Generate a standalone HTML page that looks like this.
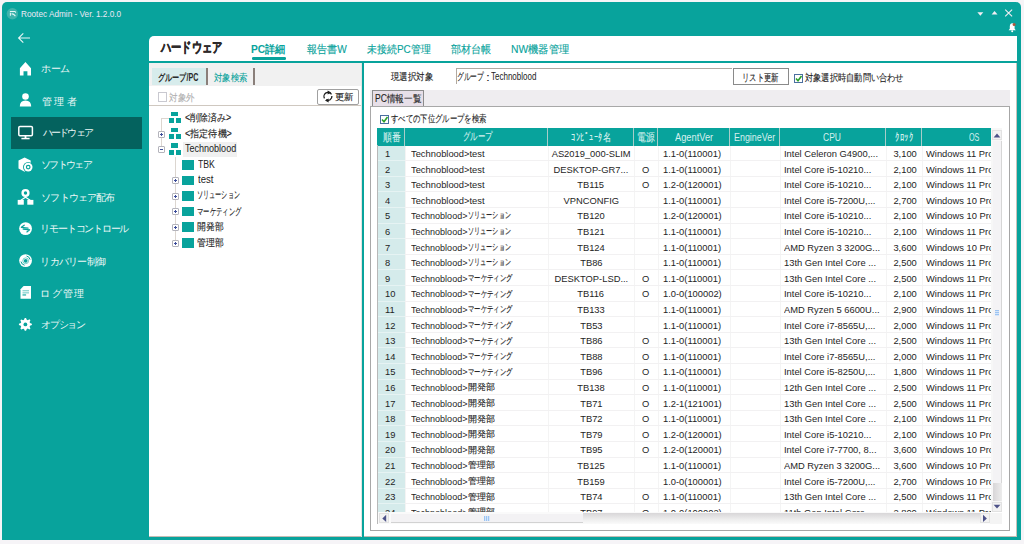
<!DOCTYPE html><html><head><meta charset='utf-8'><style>
*{box-sizing:border-box;margin:0;padding:0}
html,body{width:1024px;height:544px;overflow:hidden;background:#f6f4f7;font-family:"Liberation Sans",sans-serif;}
.a{position:absolute;white-space:nowrap}
.k{-webkit-text-stroke:0.12px currentColor}
.c{position:absolute;font-size:9.5px;line-height:14px;height:14px;color:#1e1e1e;white-space:nowrap}
.c span{display:inline-block;transform-origin:0 0}
</style></head><body>
<div class='a' style='left:2px;top:2px;width:1018.5px;height:538px;background:#08a39c;border-radius:5px 5px 0 0'></div>
<svg class='a' style='left:5px;top:6px' width='16' height='16' viewBox='5 6 16 16'><circle cx='12.4' cy='13.7' r='5.7' fill='#3fb3ac'/><path d='M9.9 11.4 L15 11.4 Q15.7 11.6 15.6 12.8 M10.4 12.7 L10.4 15.8 M11.5 14 Q13.2 13.4 15.4 16.1' stroke='#e6f8f6' stroke-width='1.05' fill='none'/></svg>
<svg class='a' style='left:970px;top:6px' width='50' height='30' viewBox='970 6 50 30'><path d='M977.4 12.3 L983.3 12.3 L980.35 15.7 Z' fill='#f4eef4'/><path d='M991.6 14.6 L997.5 14.6 L994.55 11.0 Z' fill='#f4eef4'/><path d='M1005.2 9.7 L1012.1 16.4 M1012.1 9.7 L1005.2 16.4' stroke='#f4eef4' stroke-width='1.1'/><path d='M1008.6 30.3 L1015.8 30.3 L1014.6 28.8 L1014.6 26.3 Q1014.4 23.2 1012.2 23.2 Q1010 23.2 1009.8 26.3 L1009.8 28.8 Z' fill='#fff'/><circle cx='1012.2' cy='31.2' r='1' fill='#fff'/><circle cx='1014.1' cy='24.4' r='1.5' fill='#b4573c'/></svg>
<svg class='a' style='left:16px;top:32px' width='16' height='12' viewBox='0 0 16 12'><path d='M2.6 6 L14 6 M7.3 1.4 L2.6 6 L7.3 10.6' stroke='#e8f6f5' stroke-width='1.1' fill='none'/></svg>
<div class='a' style='left:11px;top:117px;width:131px;height:32px;background:#04625e'></div>
<svg class='a' style='left:0;top:0' width='148' height='340'><path d='M19.9 68.3 L25.45 62 L31 68.3 L31 75.5 L27.4 75.5 L27.4 71.3 L23.5 71.3 L23.5 75.5 L19.9 75.5 Z' fill='#ffffff'/><circle cx='25.5' cy='96.5' r='3.3' fill='#ffffff'/><path d='M19.8 106.5 Q19.8 100.4 25.5 100.4 Q31.2 100.4 31.2 106.5 Z' fill='#ffffff'/><rect x='18.8' y='126.4' width='13.6' height='9.4' rx='1.2' stroke='#ffffff' stroke-width='1.5' fill='none'/><rect x='24.6' y='136' width='1.8' height='2' fill='#ffffff'/><rect x='21.4' y='137.8' width='8.2' height='1.5' fill='#ffffff'/><path d='M24.6 157.4 L30.7 160.6 L30.7 166 L24.6 171.8 L18.5 168.4 L18.5 160.6 Z' fill='#ffffff'/><circle cx='28.2' cy='167.1' r='5.2' fill='#08a39c'/><circle cx='28.2' cy='167.1' r='4.3' fill='#ffffff'/><circle cx='28.2' cy='167.1' r='2.4' fill='#08a39c'/><circle cx='28.2' cy='167.1' r='1.2' fill='#ffffff'/><circle cx='25.5' cy='193' r='2.9' stroke='#ffffff' stroke-width='2.4' fill='none'/><path d='M25.5 196 L25.5 197.6 M20.8 200.2 L25.5 197.2 L30.2 200.2' stroke='#ffffff' stroke-width='1.1' fill='none'/><rect x='17.7' y='199.9' width='6.1' height='4.8' fill='#ffffff'/><rect x='27.3' y='199.9' width='6.1' height='4.8' fill='#ffffff'/><circle cx='25.55' cy='228.6' r='6.4' fill='#ffffff'/><path d='M21.4 227.3 L28 228.1 M21.4 227.3 L24.2 225.2 M29.6 229.8 L23.2 229.1 M29.6 229.8 L26.9 231.9' stroke='#08a39c' stroke-width='1.3' fill='none' stroke-linecap='round'/><circle cx='25.55' cy='260.6' r='6.4' fill='#ffffff'/><path d='M26.5 256 A4.6 4.6 0 0 1 30.1 259.6 M24.6 265.2 A4.6 4.6 0 0 1 21 261.6' stroke='#08a39c' stroke-width='1' fill='none'/><circle cx='25.7' cy='260.8' r='2.9' stroke='#08a39c' stroke-width='0.9' fill='none' opacity='.6'/><circle cx='25.7' cy='260.8' r='1.9' fill='#08a39c'/><path d='M23.6 286 L31 286 L31 298.7 L20.5 298.7 L20.5 289.2 Z' fill='#ffffff'/><rect x='22.5' y='290.2' width='6.5' height='1.1' fill='#08a39c' opacity='.55'/><rect x='22.5' y='292.3' width='6.5' height='1.1' fill='#08a39c' opacity='.55'/><rect x='22.5' y='294.4' width='3.6' height='1.1' fill='#08a39c'/><polygon points='31.87,323.74 31.87,325.01 30.00,325.78 29.64,326.65 30.44,328.51 29.54,329.41 27.68,328.62 26.81,328.99 26.06,330.87 24.79,330.87 24.02,329.00 23.15,328.64 21.29,329.44 20.39,328.54 21.18,326.68 20.81,325.81 18.93,325.06 18.93,323.79 20.80,323.02 21.16,322.15 20.36,320.29 21.26,319.39 23.12,320.18 23.99,319.81 24.74,317.93 26.01,317.93 26.78,319.80 27.65,320.16 29.51,319.36 30.41,320.26 29.62,322.12 29.99,322.99' fill='#ffffff'/><circle cx='25.4' cy='324.4' r='1.9' fill='#08a39c'/></svg>
<div class='a' style='left:149px;top:36px;width:868px;height:501px;background:#fff;border-top-left-radius:5px;border-bottom:1px solid #c4bcb4'></div>
<div class='a' style='left:1016px;top:63px;width:1px;height:474px;background:#c9c1ba'></div>
<div class='a' style='left:251.5px;top:57.3px;width:34px;height:2.4px;border-radius:1.2px;background:#08a39c'></div>
<div class='a' style='left:149px;top:61px;width:868px;height:2px;background:#08a39c'></div>
<div class='a' style='left:149px;top:63px;width:212px;height:23px;background:#f1f1f1'></div>
<div class='a' style='left:152px;top:68px;width:54px;height:17px;background:#d7ecec'></div>
<div class='a' style='left:206px;top:68px;width:2px;height:17px;background:#8a7f7a'></div>
<div class='a' style='left:253px;top:68px;width:2px;height:17px;background:#8a7f7a'></div>
<div class='a' style='left:157.5px;top:92px;width:9px;height:9.5px;border:1px solid #c9c9d0;background:#fff'></div>
<div class='a' style='left:149px;top:105px;width:212px;height:1px;background:#cfc8c0'></div>
<div class='a' style='left:317px;top:89px;width:42px;height:16px;border:1px solid #a0a0a0;border-radius:2px;background:#fff'></div>
<svg class='a' style='left:318px;top:88px' width='20' height='16' viewBox='318 88 20 16'><path d='M331.5 94.4 A4 4 0 0 0 324.5 98.4' stroke='#1e1e1e' stroke-width='1.3' fill='none'/><path d='M324.6 98.5 A4 4 0 0 0 331.6 94.5' stroke='#1e1e1e' stroke-width='0' fill='none'/><path d='M326 99.9 A4 4 0 0 0 331.9 96' stroke='#1e1e1e' stroke-width='1.3' fill='none'/><path d='M327.6 90.6 L331.2 92.6 L327.6 94.6 Z' fill='#1e1e1e'/><path d='M328.6 98.4 L325 100.4 L328.6 102.4 Z' fill='#1e1e1e'/></svg>
<div class='a' style='left:161px;top:118px;width:1px;height:31px;background:#dcd6d0'></div>
<div class='a' style='left:161px;top:118px;width:8px;height:1px;background:#dcd6d0'></div>
<div class='a' style='left:175px;top:157px;width:1px;height:87px;background:#dcd6d0'></div>
<div class='a' style='left:182.5px;top:141.5px;width:54px;height:15px;background:#f0f0f0'></div>
<div class='a' style='left:171px;top:111.9px;width:7px;height:4.5px;background:#08a39c'></div><div class='a' style='left:169px;top:118.4px;width:5px;height:5px;background:#08a39c'></div><div class='a' style='left:175.5px;top:118.4px;width:5px;height:5px;background:#08a39c'></div>
<div class='a' style='left:158px;top:131px;width:7px;height:7px;border:1px solid #b4b4bc;border-radius:1px;background:#fff'></div><div class='a' style='left:160px;top:134px;width:3px;height:1px;background:#3c4c9a'></div><div class='a' style='left:161px;top:133px;width:1px;height:3px;background:#3c4c9a'></div>
<div class='a' style='left:171px;top:127.5px;width:7px;height:4.5px;background:#08a39c'></div><div class='a' style='left:169px;top:134.0px;width:5px;height:5px;background:#08a39c'></div><div class='a' style='left:175.5px;top:134.0px;width:5px;height:5px;background:#08a39c'></div>
<div class='a' style='left:158px;top:146px;width:7px;height:7px;border:1px solid #b4b4bc;border-radius:1px;background:#fff'></div><div class='a' style='left:160px;top:149px;width:3px;height:1px;background:#3c4c9a'></div>
<div class='a' style='left:171px;top:143.1px;width:7px;height:4.5px;background:#08a39c'></div><div class='a' style='left:169px;top:149.6px;width:5px;height:5px;background:#08a39c'></div><div class='a' style='left:175.5px;top:149.6px;width:5px;height:5px;background:#08a39c'></div>
<div class='a' style='left:182.2px;top:159.90px;width:11.7px;height:9.8px;background:#08a39c'></div>
<div class='a' style='left:172px;top:177px;width:7px;height:7px;border:1px solid #b4b4bc;border-radius:1px;background:#fff'></div><div class='a' style='left:174px;top:180px;width:3px;height:1px;background:#3c4c9a'></div><div class='a' style='left:175px;top:179px;width:1px;height:3px;background:#3c4c9a'></div>
<div class='a' style='left:182.2px;top:175.50px;width:11.7px;height:9.8px;background:#08a39c'></div>
<div class='a' style='left:172px;top:193px;width:7px;height:7px;border:1px solid #b4b4bc;border-radius:1px;background:#fff'></div><div class='a' style='left:174px;top:196px;width:3px;height:1px;background:#3c4c9a'></div><div class='a' style='left:175px;top:195px;width:1px;height:3px;background:#3c4c9a'></div>
<div class='a' style='left:182.2px;top:191.10px;width:11.7px;height:9.8px;background:#08a39c'></div>
<div class='a' style='left:172px;top:208px;width:7px;height:7px;border:1px solid #b4b4bc;border-radius:1px;background:#fff'></div><div class='a' style='left:174px;top:211px;width:3px;height:1px;background:#3c4c9a'></div><div class='a' style='left:175px;top:210px;width:1px;height:3px;background:#3c4c9a'></div>
<div class='a' style='left:182.2px;top:206.70px;width:11.7px;height:9.8px;background:#08a39c'></div>
<div class='a' style='left:172px;top:224px;width:7px;height:7px;border:1px solid #b4b4bc;border-radius:1px;background:#fff'></div><div class='a' style='left:174px;top:227px;width:3px;height:1px;background:#3c4c9a'></div><div class='a' style='left:175px;top:226px;width:1px;height:3px;background:#3c4c9a'></div>
<div class='a' style='left:182.2px;top:222.30px;width:11.7px;height:9.8px;background:#08a39c'></div>
<div class='a' style='left:172px;top:240px;width:7px;height:7px;border:1px solid #b4b4bc;border-radius:1px;background:#fff'></div><div class='a' style='left:174px;top:243px;width:3px;height:1px;background:#3c4c9a'></div><div class='a' style='left:175px;top:242px;width:1px;height:3px;background:#3c4c9a'></div>
<div class='a' style='left:182.2px;top:237.90px;width:11.7px;height:9.8px;background:#08a39c'></div>
<div class='a' style='left:361px;top:63px;width:1px;height:474px;background:#e4e4e4'></div>
<div class='a' style='left:362px;top:63px;width:2px;height:474px;background:#08a39c'></div>
<div class='a' style='left:456px;top:68px;width:276px;height:16px;border-top:1px solid #b0a9a2;border-left:1px solid #b0a9a2;background:#fff'></div>
<div class='a' style='left:733px;top:68px;width:56px;height:16.5px;border:1px solid #8a8a8a;background:#fff'></div>
<div class='a' style='left:794px;top:73.8px;width:9px;height:9px;border:1px solid #4b6fa0;background:#fff'></div>
<svg class='a' style='left:794px;top:73.8px' width='9' height='9'><path d='M2 4.5 L4 6.8 L7.5 2' stroke='#2aa02a' stroke-width='1.6' fill='none'/></svg>
<div class='a' style='left:370px;top:90px;width:640px;height:16px;background:#efedf0'></div>
<div class='a' style='left:372px;top:90px;width:52px;height:16px;border:1px solid #8c8c8c;border-bottom:none;background:#e7dfe8'></div>
<div class='a' style='left:370px;top:106px;width:640px;height:425px;border-left:1px solid #a8a8a8;border-top:1px solid #a8a8a8;border-right:1.5px solid #a6a6a6;border-bottom:1.5px solid #a6a6a6;background:#fff'></div>
<div class='a' style='left:380px;top:115px;width:9px;height:9.3px;border:1px solid #4b6fa0;background:#fff'></div>
<svg class='a' style='left:380px;top:115px' width='9' height='9'><path d='M2 4.5 L4 6.8 L7.5 2' stroke='#2aa02a' stroke-width='1.6' fill='none'/></svg>
<div class='a' style='left:377px;top:128px;width:614px;height:384px;overflow:hidden;background:#fff'>
<div class='a' style='left:0;top:0;width:660px;height:17.5px;background:#08a39c'></div>
<div class='a' style='left:27px;top:0;width:1px;height:17.5px;background:#a9cdc9'></div>
<div class='a' style='left:170px;top:0;width:1px;height:17.5px;background:#a9cdc9'></div>
<div class='a' style='left:256px;top:0;width:1px;height:17.5px;background:#a9cdc9'></div>
<div class='a' style='left:280px;top:0;width:1px;height:17.5px;background:#a9cdc9'></div>
<div class='a' style='left:352px;top:0;width:1px;height:17.5px;background:#a9cdc9'></div>
<div class='a' style='left:402px;top:0;width:1px;height:17.5px;background:#a9cdc9'></div>
<div class='a' style='left:508px;top:0;width:1px;height:17.5px;background:#a9cdc9'></div>
<div class='a' style='left:544px;top:0;width:1px;height:17.5px;background:#a9cdc9'></div>
<div class='a' style='left:0;top:17.5px;width:28px;height:400px;background:#d5ebeb'></div>
<div class='a' style='left:28px;top:17.5px;width:1px;height:380px;background:#f4f4f4'></div>
<div class='a' style='left:171px;top:17.5px;width:1px;height:380px;background:#f4f4f4'></div>
<div class='a' style='left:257px;top:17.5px;width:1px;height:380px;background:#f4f4f4'></div>
<div class='a' style='left:281px;top:17.5px;width:1px;height:380px;background:#f4f4f4'></div>
<div class='a' style='left:353px;top:17.5px;width:1px;height:380px;background:#f4f4f4'></div>
<div class='a' style='left:403px;top:17.5px;width:1px;height:380px;background:#f4f4f4'></div>
<div class='a' style='left:509px;top:17.5px;width:1px;height:380px;background:#f4f4f4'></div>
<div class='a' style='left:545px;top:17.5px;width:1px;height:380px;background:#f4f4f4'></div>
<div class='a' style='left:28px;top:32.10px;width:620px;height:1px;background:#f2f1f2'></div>
<div class='a' style='left:0;top:32.10px;width:28px;height:1px;background:#e6f3f3'></div>
<div class='c' style='left:7.50px;top:18.90px'><span style='transform:scaleX(0.9840)'>1</span></div>
<div class='c' style='left:34.00px;top:18.90px'><span style='transform:scaleX(0.9840)'>Technoblood&gt;test</span></div>
<div class='c' style='left:171px;width:86px;text-align:center;top:18.90px'><span style='transform:scaleX(0.9840);transform-origin:50% 0'>AS2019_000-SLIM</span></div>
<div class='c' style='left:286.20px;top:18.90px'><span style='transform:scaleX(0.9840)'>1.1-0(110001)</span></div>
<div class='c' style='left:406.50px;top:18.90px'><span style='transform:scaleX(0.9840)'>Intel Celeron G4900,...</span></div>
<div class='c' style='left:509px;width:30.5px;text-align:right;top:18.90px'><span style='transform:scaleX(0.9840);transform-origin:100% 0'>3,100</span></div>
<div class='c' style='left:548.80px;top:18.90px'><span style='transform:scaleX(0.9840)'>Windows 11 Pro</span></div>
<div class='a' style='left:28px;top:47.70px;width:620px;height:1px;background:#f2f1f2'></div>
<div class='a' style='left:0;top:47.70px;width:28px;height:1px;background:#e6f3f3'></div>
<div class='c' style='left:7.50px;top:34.50px'><span style='transform:scaleX(0.9840)'>2</span></div>
<div class='c' style='left:34.00px;top:34.50px'><span style='transform:scaleX(0.9840)'>Technoblood&gt;test</span></div>
<div class='c' style='left:171px;width:86px;text-align:center;top:34.50px'><span style='transform:scaleX(0.9840);transform-origin:50% 0'>DESKTOP-GR7...</span></div>
<div class='c' style='left:257px;width:24px;text-align:center;top:34.50px'><span style='transform:scaleX(0.9840);transform-origin:50% 0'>O</span></div>
<div class='c' style='left:286.20px;top:34.50px'><span style='transform:scaleX(0.9840)'>1.1-0(110001)</span></div>
<div class='c' style='left:406.50px;top:34.50px'><span style='transform:scaleX(0.9840)'>Intel Core i5-10210...</span></div>
<div class='c' style='left:509px;width:30.5px;text-align:right;top:34.50px'><span style='transform:scaleX(0.9840);transform-origin:100% 0'>2,100</span></div>
<div class='c' style='left:548.80px;top:34.50px'><span style='transform:scaleX(0.9840)'>Windows 11 Pro</span></div>
<div class='a' style='left:28px;top:63.30px;width:620px;height:1px;background:#f2f1f2'></div>
<div class='a' style='left:0;top:63.30px;width:28px;height:1px;background:#e6f3f3'></div>
<div class='c' style='left:7.50px;top:50.10px'><span style='transform:scaleX(0.9840)'>3</span></div>
<div class='c' style='left:34.00px;top:50.10px'><span style='transform:scaleX(0.9840)'>Technoblood&gt;test</span></div>
<div class='c' style='left:171px;width:86px;text-align:center;top:50.10px'><span style='transform:scaleX(0.9840);transform-origin:50% 0'>TB115</span></div>
<div class='c' style='left:257px;width:24px;text-align:center;top:50.10px'><span style='transform:scaleX(0.9840);transform-origin:50% 0'>O</span></div>
<div class='c' style='left:286.20px;top:50.10px'><span style='transform:scaleX(0.9840)'>1.2-0(120001)</span></div>
<div class='c' style='left:406.50px;top:50.10px'><span style='transform:scaleX(0.9840)'>Intel Core i5-10210...</span></div>
<div class='c' style='left:509px;width:30.5px;text-align:right;top:50.10px'><span style='transform:scaleX(0.9840);transform-origin:100% 0'>2,100</span></div>
<div class='c' style='left:548.80px;top:50.10px'><span style='transform:scaleX(0.9840)'>Windows 11 Pro</span></div>
<div class='a' style='left:28px;top:78.90px;width:620px;height:1px;background:#f2f1f2'></div>
<div class='a' style='left:0;top:78.90px;width:28px;height:1px;background:#e6f3f3'></div>
<div class='c' style='left:7.50px;top:65.70px'><span style='transform:scaleX(0.9840)'>4</span></div>
<div class='c' style='left:34.00px;top:65.70px'><span style='transform:scaleX(0.9840)'>Technoblood&gt;test</span></div>
<div class='c' style='left:171px;width:86px;text-align:center;top:65.70px'><span style='transform:scaleX(0.9840);transform-origin:50% 0'>VPNCONFIG</span></div>
<div class='c' style='left:286.20px;top:65.70px'><span style='transform:scaleX(0.9840)'>1.1-0(110001)</span></div>
<div class='c' style='left:406.50px;top:65.70px'><span style='transform:scaleX(0.9840)'>Intel Core i5-7200U,...</span></div>
<div class='c' style='left:509px;width:30.5px;text-align:right;top:65.70px'><span style='transform:scaleX(0.9840);transform-origin:100% 0'>2,700</span></div>
<div class='c' style='left:548.80px;top:65.70px'><span style='transform:scaleX(0.9840)'>Windows 10 Pro</span></div>
<div class='a' style='left:28px;top:94.50px;width:620px;height:1px;background:#f2f1f2'></div>
<div class='a' style='left:0;top:94.50px;width:28px;height:1px;background:#e6f3f3'></div>
<div class='c' style='left:7.50px;top:81.30px'><span style='transform:scaleX(0.9840)'>5</span></div>
<div class='a k' style='left:91.42px;top:80.30px;font-size:9px;line-height:14px;color:#1e1e1e;transform:scaleX(0.6787);transform-origin:0 0'>ソリューション</div>
<div class='c' style='left:34.00px;top:81.30px'><span style='transform:scaleX(0.9496)'>Technoblood&gt;</span></div>
<div class='c' style='left:171px;width:86px;text-align:center;top:81.30px'><span style='transform:scaleX(0.9840);transform-origin:50% 0'>TB120</span></div>
<div class='c' style='left:286.20px;top:81.30px'><span style='transform:scaleX(0.9840)'>1.2-0(120001)</span></div>
<div class='c' style='left:406.50px;top:81.30px'><span style='transform:scaleX(0.9840)'>Intel Core i5-10210...</span></div>
<div class='c' style='left:509px;width:30.5px;text-align:right;top:81.30px'><span style='transform:scaleX(0.9840);transform-origin:100% 0'>2,100</span></div>
<div class='c' style='left:548.80px;top:81.30px'><span style='transform:scaleX(0.9840)'>Windows 10 Pro</span></div>
<div class='a' style='left:28px;top:110.10px;width:620px;height:1px;background:#f2f1f2'></div>
<div class='a' style='left:0;top:110.10px;width:28px;height:1px;background:#e6f3f3'></div>
<div class='c' style='left:7.50px;top:96.90px'><span style='transform:scaleX(0.9840)'>6</span></div>
<div class='a k' style='left:91.42px;top:95.90px;font-size:9px;line-height:14px;color:#1e1e1e;transform:scaleX(0.6787);transform-origin:0 0'>ソリューション</div>
<div class='c' style='left:34.00px;top:96.90px'><span style='transform:scaleX(0.9496)'>Technoblood&gt;</span></div>
<div class='c' style='left:171px;width:86px;text-align:center;top:96.90px'><span style='transform:scaleX(0.9840);transform-origin:50% 0'>TB121</span></div>
<div class='c' style='left:286.20px;top:96.90px'><span style='transform:scaleX(0.9840)'>1.1-0(110001)</span></div>
<div class='c' style='left:406.50px;top:96.90px'><span style='transform:scaleX(0.9840)'>Intel Core i5-10210...</span></div>
<div class='c' style='left:509px;width:30.5px;text-align:right;top:96.90px'><span style='transform:scaleX(0.9840);transform-origin:100% 0'>2,100</span></div>
<div class='c' style='left:548.80px;top:96.90px'><span style='transform:scaleX(0.9840)'>Windows 11 Pro</span></div>
<div class='a' style='left:28px;top:125.70px;width:620px;height:1px;background:#f2f1f2'></div>
<div class='a' style='left:0;top:125.70px;width:28px;height:1px;background:#e6f3f3'></div>
<div class='c' style='left:7.50px;top:112.50px'><span style='transform:scaleX(0.9840)'>7</span></div>
<div class='a k' style='left:91.42px;top:111.50px;font-size:9px;line-height:14px;color:#1e1e1e;transform:scaleX(0.6787);transform-origin:0 0'>ソリューション</div>
<div class='c' style='left:34.00px;top:112.50px'><span style='transform:scaleX(0.9496)'>Technoblood&gt;</span></div>
<div class='c' style='left:171px;width:86px;text-align:center;top:112.50px'><span style='transform:scaleX(0.9840);transform-origin:50% 0'>TB124</span></div>
<div class='c' style='left:286.20px;top:112.50px'><span style='transform:scaleX(0.9840)'>1.1-0(110001)</span></div>
<div class='c' style='left:406.50px;top:112.50px'><span style='transform:scaleX(0.9840)'>AMD Ryzen 3 3200G...</span></div>
<div class='c' style='left:509px;width:30.5px;text-align:right;top:112.50px'><span style='transform:scaleX(0.9840);transform-origin:100% 0'>3,600</span></div>
<div class='c' style='left:548.80px;top:112.50px'><span style='transform:scaleX(0.9840)'>Windows 10 Pro</span></div>
<div class='a' style='left:28px;top:141.30px;width:620px;height:1px;background:#f2f1f2'></div>
<div class='a' style='left:0;top:141.30px;width:28px;height:1px;background:#e6f3f3'></div>
<div class='c' style='left:7.50px;top:128.10px'><span style='transform:scaleX(0.9840)'>8</span></div>
<div class='a k' style='left:91.42px;top:127.10px;font-size:9px;line-height:14px;color:#1e1e1e;transform:scaleX(0.6787);transform-origin:0 0'>ソリューション</div>
<div class='c' style='left:34.00px;top:128.10px'><span style='transform:scaleX(0.9496)'>Technoblood&gt;</span></div>
<div class='c' style='left:171px;width:86px;text-align:center;top:128.10px'><span style='transform:scaleX(0.9840);transform-origin:50% 0'>TB86</span></div>
<div class='c' style='left:286.20px;top:128.10px'><span style='transform:scaleX(0.9840)'>1.1-0(110001)</span></div>
<div class='c' style='left:406.50px;top:128.10px'><span style='transform:scaleX(0.9840)'>13th Gen Intel Core ...</span></div>
<div class='c' style='left:509px;width:30.5px;text-align:right;top:128.10px'><span style='transform:scaleX(0.9840);transform-origin:100% 0'>2,500</span></div>
<div class='c' style='left:548.80px;top:128.10px'><span style='transform:scaleX(0.9840)'>Windows 11 Pro</span></div>
<div class='a' style='left:28px;top:156.90px;width:620px;height:1px;background:#f2f1f2'></div>
<div class='a' style='left:0;top:156.90px;width:28px;height:1px;background:#e6f3f3'></div>
<div class='c' style='left:7.50px;top:143.70px'><span style='transform:scaleX(0.9840)'>9</span></div>
<div class='a k' style='left:91.39px;top:143.20px;font-size:9px;line-height:14px;color:#1e1e1e;transform:scaleX(0.7065);transform-origin:0 0'>マーケティング</div>
<div class='c' style='left:34.00px;top:143.70px'><span style='transform:scaleX(0.9496)'>Technoblood&gt;</span></div>
<div class='c' style='left:171px;width:86px;text-align:center;top:143.70px'><span style='transform:scaleX(0.9840);transform-origin:50% 0'>DESKTOP-LSD...</span></div>
<div class='c' style='left:257px;width:24px;text-align:center;top:143.70px'><span style='transform:scaleX(0.9840);transform-origin:50% 0'>O</span></div>
<div class='c' style='left:286.20px;top:143.70px'><span style='transform:scaleX(0.9840)'>1.1-0(110001)</span></div>
<div class='c' style='left:406.50px;top:143.70px'><span style='transform:scaleX(0.9840)'>13th Gen Intel Core ...</span></div>
<div class='c' style='left:509px;width:30.5px;text-align:right;top:143.70px'><span style='transform:scaleX(0.9840);transform-origin:100% 0'>2,500</span></div>
<div class='c' style='left:548.80px;top:143.70px'><span style='transform:scaleX(0.9840)'>Windows 11 Pro</span></div>
<div class='a' style='left:28px;top:172.50px;width:620px;height:1px;background:#f2f1f2'></div>
<div class='a' style='left:0;top:172.50px;width:28px;height:1px;background:#e6f3f3'></div>
<div class='c' style='left:7.50px;top:159.30px'><span style='transform:scaleX(0.9840)'>10</span></div>
<div class='a k' style='left:91.39px;top:158.80px;font-size:9px;line-height:14px;color:#1e1e1e;transform:scaleX(0.7065);transform-origin:0 0'>マーケティング</div>
<div class='c' style='left:34.00px;top:159.30px'><span style='transform:scaleX(0.9496)'>Technoblood&gt;</span></div>
<div class='c' style='left:171px;width:86px;text-align:center;top:159.30px'><span style='transform:scaleX(0.9840);transform-origin:50% 0'>TB116</span></div>
<div class='c' style='left:257px;width:24px;text-align:center;top:159.30px'><span style='transform:scaleX(0.9840);transform-origin:50% 0'>O</span></div>
<div class='c' style='left:286.20px;top:159.30px'><span style='transform:scaleX(0.9840)'>1.0-0(100002)</span></div>
<div class='c' style='left:406.50px;top:159.30px'><span style='transform:scaleX(0.9840)'>Intel Core i5-10210...</span></div>
<div class='c' style='left:509px;width:30.5px;text-align:right;top:159.30px'><span style='transform:scaleX(0.9840);transform-origin:100% 0'>2,100</span></div>
<div class='c' style='left:548.80px;top:159.30px'><span style='transform:scaleX(0.9840)'>Windows 11 Pro</span></div>
<div class='a' style='left:28px;top:188.10px;width:620px;height:1px;background:#f2f1f2'></div>
<div class='a' style='left:0;top:188.10px;width:28px;height:1px;background:#e6f3f3'></div>
<div class='c' style='left:7.50px;top:174.90px'><span style='transform:scaleX(0.9840)'>11</span></div>
<div class='a k' style='left:91.39px;top:174.40px;font-size:9px;line-height:14px;color:#1e1e1e;transform:scaleX(0.7065);transform-origin:0 0'>マーケティング</div>
<div class='c' style='left:34.00px;top:174.90px'><span style='transform:scaleX(0.9496)'>Technoblood&gt;</span></div>
<div class='c' style='left:171px;width:86px;text-align:center;top:174.90px'><span style='transform:scaleX(0.9840);transform-origin:50% 0'>TB133</span></div>
<div class='c' style='left:286.20px;top:174.90px'><span style='transform:scaleX(0.9840)'>1.1-0(110001)</span></div>
<div class='c' style='left:406.50px;top:174.90px'><span style='transform:scaleX(0.9840)'>AMD Ryzen 5 6600U...</span></div>
<div class='c' style='left:509px;width:30.5px;text-align:right;top:174.90px'><span style='transform:scaleX(0.9840);transform-origin:100% 0'>2,900</span></div>
<div class='c' style='left:548.80px;top:174.90px'><span style='transform:scaleX(0.9840)'>Windows 11 Pro</span></div>
<div class='a' style='left:28px;top:203.70px;width:620px;height:1px;background:#f2f1f2'></div>
<div class='a' style='left:0;top:203.70px;width:28px;height:1px;background:#e6f3f3'></div>
<div class='c' style='left:7.50px;top:190.50px'><span style='transform:scaleX(0.9840)'>12</span></div>
<div class='a k' style='left:91.39px;top:190.00px;font-size:9px;line-height:14px;color:#1e1e1e;transform:scaleX(0.7065);transform-origin:0 0'>マーケティング</div>
<div class='c' style='left:34.00px;top:190.50px'><span style='transform:scaleX(0.9496)'>Technoblood&gt;</span></div>
<div class='c' style='left:171px;width:86px;text-align:center;top:190.50px'><span style='transform:scaleX(0.9840);transform-origin:50% 0'>TB53</span></div>
<div class='c' style='left:286.20px;top:190.50px'><span style='transform:scaleX(0.9840)'>1.1-0(110001)</span></div>
<div class='c' style='left:406.50px;top:190.50px'><span style='transform:scaleX(0.9840)'>Intel Core i7-8565U,...</span></div>
<div class='c' style='left:509px;width:30.5px;text-align:right;top:190.50px'><span style='transform:scaleX(0.9840);transform-origin:100% 0'>2,000</span></div>
<div class='c' style='left:548.80px;top:190.50px'><span style='transform:scaleX(0.9840)'>Windows 11 Pro</span></div>
<div class='a' style='left:28px;top:219.30px;width:620px;height:1px;background:#f2f1f2'></div>
<div class='a' style='left:0;top:219.30px;width:28px;height:1px;background:#e6f3f3'></div>
<div class='c' style='left:7.50px;top:206.10px'><span style='transform:scaleX(0.9840)'>13</span></div>
<div class='a k' style='left:91.39px;top:205.60px;font-size:9px;line-height:14px;color:#1e1e1e;transform:scaleX(0.7065);transform-origin:0 0'>マーケティング</div>
<div class='c' style='left:34.00px;top:206.10px'><span style='transform:scaleX(0.9496)'>Technoblood&gt;</span></div>
<div class='c' style='left:171px;width:86px;text-align:center;top:206.10px'><span style='transform:scaleX(0.9840);transform-origin:50% 0'>TB86</span></div>
<div class='c' style='left:257px;width:24px;text-align:center;top:206.10px'><span style='transform:scaleX(0.9840);transform-origin:50% 0'>O</span></div>
<div class='c' style='left:286.20px;top:206.10px'><span style='transform:scaleX(0.9840)'>1.1-0(110001)</span></div>
<div class='c' style='left:406.50px;top:206.10px'><span style='transform:scaleX(0.9840)'>13th Gen Intel Core ...</span></div>
<div class='c' style='left:509px;width:30.5px;text-align:right;top:206.10px'><span style='transform:scaleX(0.9840);transform-origin:100% 0'>2,500</span></div>
<div class='c' style='left:548.80px;top:206.10px'><span style='transform:scaleX(0.9840)'>Windows 11 Pro</span></div>
<div class='a' style='left:28px;top:234.90px;width:620px;height:1px;background:#f2f1f2'></div>
<div class='a' style='left:0;top:234.90px;width:28px;height:1px;background:#e6f3f3'></div>
<div class='c' style='left:7.50px;top:221.70px'><span style='transform:scaleX(0.9840)'>14</span></div>
<div class='a k' style='left:91.39px;top:221.20px;font-size:9px;line-height:14px;color:#1e1e1e;transform:scaleX(0.7065);transform-origin:0 0'>マーケティング</div>
<div class='c' style='left:34.00px;top:221.70px'><span style='transform:scaleX(0.9496)'>Technoblood&gt;</span></div>
<div class='c' style='left:171px;width:86px;text-align:center;top:221.70px'><span style='transform:scaleX(0.9840);transform-origin:50% 0'>TB88</span></div>
<div class='c' style='left:257px;width:24px;text-align:center;top:221.70px'><span style='transform:scaleX(0.9840);transform-origin:50% 0'>O</span></div>
<div class='c' style='left:286.20px;top:221.70px'><span style='transform:scaleX(0.9840)'>1.1-0(110001)</span></div>
<div class='c' style='left:406.50px;top:221.70px'><span style='transform:scaleX(0.9840)'>Intel Core i7-8565U,...</span></div>
<div class='c' style='left:509px;width:30.5px;text-align:right;top:221.70px'><span style='transform:scaleX(0.9840);transform-origin:100% 0'>2,000</span></div>
<div class='c' style='left:548.80px;top:221.70px'><span style='transform:scaleX(0.9840)'>Windows 11 Pro</span></div>
<div class='a' style='left:28px;top:250.50px;width:620px;height:1px;background:#f2f1f2'></div>
<div class='a' style='left:0;top:250.50px;width:28px;height:1px;background:#e6f3f3'></div>
<div class='c' style='left:7.50px;top:237.30px'><span style='transform:scaleX(0.9840)'>15</span></div>
<div class='a k' style='left:91.39px;top:236.80px;font-size:9px;line-height:14px;color:#1e1e1e;transform:scaleX(0.7065);transform-origin:0 0'>マーケティング</div>
<div class='c' style='left:34.00px;top:237.30px'><span style='transform:scaleX(0.9496)'>Technoblood&gt;</span></div>
<div class='c' style='left:171px;width:86px;text-align:center;top:237.30px'><span style='transform:scaleX(0.9840);transform-origin:50% 0'>TB96</span></div>
<div class='c' style='left:257px;width:24px;text-align:center;top:237.30px'><span style='transform:scaleX(0.9840);transform-origin:50% 0'>O</span></div>
<div class='c' style='left:286.20px;top:237.30px'><span style='transform:scaleX(0.9840)'>1.1-0(110001)</span></div>
<div class='c' style='left:406.50px;top:237.30px'><span style='transform:scaleX(0.9840)'>Intel Core i5-8250U,...</span></div>
<div class='c' style='left:509px;width:30.5px;text-align:right;top:237.30px'><span style='transform:scaleX(0.9840);transform-origin:100% 0'>1,800</span></div>
<div class='c' style='left:548.80px;top:237.30px'><span style='transform:scaleX(0.9840)'>Windows 11 Pro</span></div>
<div class='a' style='left:28px;top:266.10px;width:620px;height:1px;background:#f2f1f2'></div>
<div class='a' style='left:0;top:266.10px;width:28px;height:1px;background:#e6f3f3'></div>
<div class='c' style='left:7.50px;top:252.90px'><span style='transform:scaleX(0.9840)'>16</span></div>
<div class='a k' style='left:91.10px;top:252.40px;font-size:8.5px;line-height:14px;color:#1e1e1e;transform:scaleX(1.0000);transform-origin:0 0'>開発部</div>
<div class='c' style='left:34.00px;top:252.90px'><span style='transform:scaleX(0.9496)'>Technoblood&gt;</span></div>
<div class='c' style='left:171px;width:86px;text-align:center;top:252.90px'><span style='transform:scaleX(0.9840);transform-origin:50% 0'>TB138</span></div>
<div class='c' style='left:257px;width:24px;text-align:center;top:252.90px'><span style='transform:scaleX(0.9840);transform-origin:50% 0'>O</span></div>
<div class='c' style='left:286.20px;top:252.90px'><span style='transform:scaleX(0.9840)'>1.1-0(110001)</span></div>
<div class='c' style='left:406.50px;top:252.90px'><span style='transform:scaleX(0.9840)'>12th Gen Intel Core ...</span></div>
<div class='c' style='left:509px;width:30.5px;text-align:right;top:252.90px'><span style='transform:scaleX(0.9840);transform-origin:100% 0'>2,500</span></div>
<div class='c' style='left:548.80px;top:252.90px'><span style='transform:scaleX(0.9840)'>Windows 11 Pro</span></div>
<div class='a' style='left:28px;top:281.70px;width:620px;height:1px;background:#f2f1f2'></div>
<div class='a' style='left:0;top:281.70px;width:28px;height:1px;background:#e6f3f3'></div>
<div class='c' style='left:7.50px;top:268.50px'><span style='transform:scaleX(0.9840)'>17</span></div>
<div class='a k' style='left:91.10px;top:268.00px;font-size:8.5px;line-height:14px;color:#1e1e1e;transform:scaleX(1.0000);transform-origin:0 0'>開発部</div>
<div class='c' style='left:34.00px;top:268.50px'><span style='transform:scaleX(0.9496)'>Technoblood&gt;</span></div>
<div class='c' style='left:171px;width:86px;text-align:center;top:268.50px'><span style='transform:scaleX(0.9840);transform-origin:50% 0'>TB71</span></div>
<div class='c' style='left:257px;width:24px;text-align:center;top:268.50px'><span style='transform:scaleX(0.9840);transform-origin:50% 0'>O</span></div>
<div class='c' style='left:286.20px;top:268.50px'><span style='transform:scaleX(0.9840)'>1.2-1(121001)</span></div>
<div class='c' style='left:406.50px;top:268.50px'><span style='transform:scaleX(0.9840)'>13th Gen Intel Core ...</span></div>
<div class='c' style='left:509px;width:30.5px;text-align:right;top:268.50px'><span style='transform:scaleX(0.9840);transform-origin:100% 0'>2,500</span></div>
<div class='c' style='left:548.80px;top:268.50px'><span style='transform:scaleX(0.9840)'>Windows 11 Pro</span></div>
<div class='a' style='left:28px;top:297.30px;width:620px;height:1px;background:#f2f1f2'></div>
<div class='a' style='left:0;top:297.30px;width:28px;height:1px;background:#e6f3f3'></div>
<div class='c' style='left:7.50px;top:284.10px'><span style='transform:scaleX(0.9840)'>18</span></div>
<div class='a k' style='left:91.10px;top:283.60px;font-size:8.5px;line-height:14px;color:#1e1e1e;transform:scaleX(1.0000);transform-origin:0 0'>開発部</div>
<div class='c' style='left:34.00px;top:284.10px'><span style='transform:scaleX(0.9496)'>Technoblood&gt;</span></div>
<div class='c' style='left:171px;width:86px;text-align:center;top:284.10px'><span style='transform:scaleX(0.9840);transform-origin:50% 0'>TB72</span></div>
<div class='c' style='left:257px;width:24px;text-align:center;top:284.10px'><span style='transform:scaleX(0.9840);transform-origin:50% 0'>O</span></div>
<div class='c' style='left:286.20px;top:284.10px'><span style='transform:scaleX(0.9840)'>1.1-0(110001)</span></div>
<div class='c' style='left:406.50px;top:284.10px'><span style='transform:scaleX(0.9840)'>13th Gen Intel Core ...</span></div>
<div class='c' style='left:509px;width:30.5px;text-align:right;top:284.10px'><span style='transform:scaleX(0.9840);transform-origin:100% 0'>2,100</span></div>
<div class='c' style='left:548.80px;top:284.10px'><span style='transform:scaleX(0.9840)'>Windows 11 Pro</span></div>
<div class='a' style='left:28px;top:312.90px;width:620px;height:1px;background:#f2f1f2'></div>
<div class='a' style='left:0;top:312.90px;width:28px;height:1px;background:#e6f3f3'></div>
<div class='c' style='left:7.50px;top:299.70px'><span style='transform:scaleX(0.9840)'>19</span></div>
<div class='a k' style='left:91.10px;top:299.20px;font-size:8.5px;line-height:14px;color:#1e1e1e;transform:scaleX(1.0000);transform-origin:0 0'>開発部</div>
<div class='c' style='left:34.00px;top:299.70px'><span style='transform:scaleX(0.9496)'>Technoblood&gt;</span></div>
<div class='c' style='left:171px;width:86px;text-align:center;top:299.70px'><span style='transform:scaleX(0.9840);transform-origin:50% 0'>TB79</span></div>
<div class='c' style='left:257px;width:24px;text-align:center;top:299.70px'><span style='transform:scaleX(0.9840);transform-origin:50% 0'>O</span></div>
<div class='c' style='left:286.20px;top:299.70px'><span style='transform:scaleX(0.9840)'>1.2-0(120001)</span></div>
<div class='c' style='left:406.50px;top:299.70px'><span style='transform:scaleX(0.9840)'>Intel Core i5-10210...</span></div>
<div class='c' style='left:509px;width:30.5px;text-align:right;top:299.70px'><span style='transform:scaleX(0.9840);transform-origin:100% 0'>2,100</span></div>
<div class='c' style='left:548.80px;top:299.70px'><span style='transform:scaleX(0.9840)'>Windows 10 Pro</span></div>
<div class='a' style='left:28px;top:328.50px;width:620px;height:1px;background:#f2f1f2'></div>
<div class='a' style='left:0;top:328.50px;width:28px;height:1px;background:#e6f3f3'></div>
<div class='c' style='left:7.50px;top:315.30px'><span style='transform:scaleX(0.9840)'>20</span></div>
<div class='a k' style='left:91.10px;top:314.80px;font-size:8.5px;line-height:14px;color:#1e1e1e;transform:scaleX(1.0000);transform-origin:0 0'>開発部</div>
<div class='c' style='left:34.00px;top:315.30px'><span style='transform:scaleX(0.9496)'>Technoblood&gt;</span></div>
<div class='c' style='left:171px;width:86px;text-align:center;top:315.30px'><span style='transform:scaleX(0.9840);transform-origin:50% 0'>TB95</span></div>
<div class='c' style='left:257px;width:24px;text-align:center;top:315.30px'><span style='transform:scaleX(0.9840);transform-origin:50% 0'>O</span></div>
<div class='c' style='left:286.20px;top:315.30px'><span style='transform:scaleX(0.9840)'>1.2-0(120001)</span></div>
<div class='c' style='left:406.50px;top:315.30px'><span style='transform:scaleX(0.9840)'>Intel Core i7-7700, 8...</span></div>
<div class='c' style='left:509px;width:30.5px;text-align:right;top:315.30px'><span style='transform:scaleX(0.9840);transform-origin:100% 0'>3,600</span></div>
<div class='c' style='left:548.80px;top:315.30px'><span style='transform:scaleX(0.9840)'>Windows 10 Pro</span></div>
<div class='a' style='left:28px;top:344.10px;width:620px;height:1px;background:#f2f1f2'></div>
<div class='a' style='left:0;top:344.10px;width:28px;height:1px;background:#e6f3f3'></div>
<div class='c' style='left:7.50px;top:330.90px'><span style='transform:scaleX(0.9840)'>21</span></div>
<div class='a k' style='left:91.10px;top:330.40px;font-size:8.5px;line-height:14px;color:#1e1e1e;transform:scaleX(1.0000);transform-origin:0 0'>管理部</div>
<div class='c' style='left:34.00px;top:330.90px'><span style='transform:scaleX(0.9496)'>Technoblood&gt;</span></div>
<div class='c' style='left:171px;width:86px;text-align:center;top:330.90px'><span style='transform:scaleX(0.9840);transform-origin:50% 0'>TB125</span></div>
<div class='c' style='left:286.20px;top:330.90px'><span style='transform:scaleX(0.9840)'>1.1-0(110001)</span></div>
<div class='c' style='left:406.50px;top:330.90px'><span style='transform:scaleX(0.9840)'>AMD Ryzen 3 3200G...</span></div>
<div class='c' style='left:509px;width:30.5px;text-align:right;top:330.90px'><span style='transform:scaleX(0.9840);transform-origin:100% 0'>3,600</span></div>
<div class='c' style='left:548.80px;top:330.90px'><span style='transform:scaleX(0.9840)'>Windows 10 Pro</span></div>
<div class='a' style='left:28px;top:359.70px;width:620px;height:1px;background:#f2f1f2'></div>
<div class='a' style='left:0;top:359.70px;width:28px;height:1px;background:#e6f3f3'></div>
<div class='c' style='left:7.50px;top:346.50px'><span style='transform:scaleX(0.9840)'>22</span></div>
<div class='a k' style='left:91.10px;top:346.00px;font-size:8.5px;line-height:14px;color:#1e1e1e;transform:scaleX(1.0000);transform-origin:0 0'>管理部</div>
<div class='c' style='left:34.00px;top:346.50px'><span style='transform:scaleX(0.9496)'>Technoblood&gt;</span></div>
<div class='c' style='left:171px;width:86px;text-align:center;top:346.50px'><span style='transform:scaleX(0.9840);transform-origin:50% 0'>TB159</span></div>
<div class='c' style='left:286.20px;top:346.50px'><span style='transform:scaleX(0.9840)'>1.0-0(100001)</span></div>
<div class='c' style='left:406.50px;top:346.50px'><span style='transform:scaleX(0.9840)'>Intel Core i5-7200U,...</span></div>
<div class='c' style='left:509px;width:30.5px;text-align:right;top:346.50px'><span style='transform:scaleX(0.9840);transform-origin:100% 0'>2,700</span></div>
<div class='c' style='left:548.80px;top:346.50px'><span style='transform:scaleX(0.9840)'>Windows 10 Pro</span></div>
<div class='a' style='left:28px;top:375.30px;width:620px;height:1px;background:#f2f1f2'></div>
<div class='a' style='left:0;top:375.30px;width:28px;height:1px;background:#e6f3f3'></div>
<div class='c' style='left:7.50px;top:362.10px'><span style='transform:scaleX(0.9840)'>23</span></div>
<div class='a k' style='left:91.10px;top:361.60px;font-size:8.5px;line-height:14px;color:#1e1e1e;transform:scaleX(1.0000);transform-origin:0 0'>管理部</div>
<div class='c' style='left:34.00px;top:362.10px'><span style='transform:scaleX(0.9496)'>Technoblood&gt;</span></div>
<div class='c' style='left:171px;width:86px;text-align:center;top:362.10px'><span style='transform:scaleX(0.9840);transform-origin:50% 0'>TB74</span></div>
<div class='c' style='left:257px;width:24px;text-align:center;top:362.10px'><span style='transform:scaleX(0.9840);transform-origin:50% 0'>O</span></div>
<div class='c' style='left:286.20px;top:362.10px'><span style='transform:scaleX(0.9840)'>1.1-0(110001)</span></div>
<div class='c' style='left:406.50px;top:362.10px'><span style='transform:scaleX(0.9840)'>13th Gen Intel Core ...</span></div>
<div class='c' style='left:509px;width:30.5px;text-align:right;top:362.10px'><span style='transform:scaleX(0.9840);transform-origin:100% 0'>2,500</span></div>
<div class='c' style='left:548.80px;top:362.10px'><span style='transform:scaleX(0.9840)'>Windows 11 Pro</span></div>
<div class='a' style='left:28px;top:390.90px;width:620px;height:1px;background:#f2f1f2'></div>
<div class='a' style='left:0;top:390.90px;width:28px;height:1px;background:#e6f3f3'></div>
<div class='c' style='left:7.50px;top:377.70px'><span style='transform:scaleX(0.9840)'>24</span></div>
<div class='a k' style='left:91.10px;top:377.20px;font-size:8.5px;line-height:14px;color:#1e1e1e;transform:scaleX(1.0000);transform-origin:0 0'>管理部</div>
<div class='c' style='left:34.00px;top:377.70px'><span style='transform:scaleX(0.9496)'>Technoblood&gt;</span></div>
<div class='c' style='left:171px;width:86px;text-align:center;top:377.70px'><span style='transform:scaleX(0.9840);transform-origin:50% 0'>TB97</span></div>
<div class='c' style='left:257px;width:24px;text-align:center;top:377.70px'><span style='transform:scaleX(0.9840);transform-origin:50% 0'>O</span></div>
<div class='c' style='left:286.20px;top:377.70px'><span style='transform:scaleX(0.9840)'>1.0-0(100002)</span></div>
<div class='c' style='left:406.50px;top:377.70px'><span style='transform:scaleX(0.9840)'>11th Gen Intel Core ...</span></div>
<div class='c' style='left:509px;width:30.5px;text-align:right;top:377.70px'><span style='transform:scaleX(0.9840);transform-origin:100% 0'>2,800</span></div>
<div class='c' style='left:548.80px;top:377.70px'><span style='transform:scaleX(0.9840)'>Windows 11 Pro</span></div>
</div>
<div class='a' style='left:21.06px;top:7.30px;font-size:9.8px;line-height:14px;color:#ece8f6;transform:scaleX(0.8398);transform-origin:0 0'>Rootec Admin - Ver. 1.2.0.0</div>
<div class='a' style='left:41.40px;top:62.30px;font-size:10px;line-height:14px;color:#eef8f7;letter-spacing:-0.650px'>ホーム</div>
<div class='a' style='left:42.00px;top:94.80px;font-size:10px;line-height:14px;color:#eef8f7;letter-spacing:2.250px'>管理者</div>
<div class='a' style='left:42.50px;top:126.30px;font-size:10px;line-height:14px;color:#eef8f7;letter-spacing:-1.740px'>ハードウェア</div>
<div class='a' style='left:41.20px;top:158.30px;font-size:10px;line-height:14px;color:#eef8f7;letter-spacing:-1.700px'>ソフトウェア</div>
<div class='a' style='left:41.20px;top:190.80px;font-size:10px;line-height:14px;color:#eef8f7;letter-spacing:-0.843px'>ソフトウェア配布</div>
<div class='a' style='left:40.40px;top:222.30px;font-size:10px;line-height:14px;color:#eef8f7;letter-spacing:-1.211px'>リモートコントロール</div>
<div class='a' style='left:40.40px;top:254.80px;font-size:10px;line-height:14px;color:#eef8f7;letter-spacing:-0.750px'>リカバリー制御</div>
<div class='a' style='left:40.40px;top:286.80px;font-size:10px;line-height:14px;color:#eef8f7;letter-spacing:1.133px'>ログ管理</div>
<div class='a' style='left:41.40px;top:318.30px;font-size:10px;line-height:14px;color:#eef8f7;letter-spacing:-1.400px'>オプション</div>
<div class='a' style='left:161.43px;top:38.20px;font-size:14px;line-height:18px;font-weight:bold;-webkit-text-stroke:0.5px #2e2a2a;color:#2e2a2a;transform:scaleX(0.7318);transform-origin:0 0'>ハードウェア</div>
<div class='a' style='left:251.07px;top:41.50px;font-size:11px;line-height:14px;font-weight:bold;color:#08a39c;transform:scaleX(0.9250);transform-origin:0 0'>PC詳細</div>
<div class='a k' style='left:306.80px;top:42.00px;font-size:11px;line-height:14px;color:#08a39c;transform:scaleX(0.9186);transform-origin:0 0'>報告書W</div>
<div class='a k' style='left:367.29px;top:42.00px;font-size:11px;line-height:14px;color:#08a39c;transform:scaleX(0.9059);transform-origin:0 0'>未接続PC管理</div>
<div class='a k' style='left:450.90px;top:42.00px;font-size:11px;line-height:14px;color:#08a39c;transform:scaleX(0.9186);transform-origin:0 0'>部材台帳</div>
<div class='a k' style='left:511.26px;top:42.00px;font-size:11px;line-height:14px;color:#08a39c;transform:scaleX(0.9367);transform-origin:0 0'>NW機器管理</div>
<div class='a' style='left:157.79px;top:70.50px;font-size:10px;line-height:14px;font-weight:bold;color:#2a2a2a;transform:scaleX(0.7145);transform-origin:0 0'>グループ/PC</div>
<div class='a k' style='left:213.60px;top:70.80px;font-size:10px;line-height:14px;color:#08a39c;transform:scaleX(0.8350);transform-origin:0 0'>対象検索</div>
<div class='a k' style='left:169.00px;top:90.50px;font-size:10px;line-height:14px;color:#b0b0b0;transform:scaleX(0.8517);transform-origin:0 0'>対象外</div>
<div class='a k' style='left:335.16px;top:89.70px;font-size:9px;line-height:14px;color:#222;transform:scaleX(1.0375);transform-origin:0 0'>更新</div>
<div class='a k' style='left:184.70px;top:110.90px;font-size:10px;line-height:14px;color:#222;transform:scaleX(0.8961);transform-origin:0 0'>&lt;削除済み&gt;</div>
<div class='a k' style='left:184.70px;top:126.50px;font-size:10px;line-height:14px;color:#222;transform:scaleX(0.9078);transform-origin:0 0'>&lt;指定待機&gt;</div>
<div class='a' style='left:184.70px;top:141.30px;font-size:10.5px;line-height:14px;color:#222;transform:scaleX(0.8593);transform-origin:0 0'>Technoblood</div>
<div class='a' style='left:198.00px;top:157.90px;font-size:10px;line-height:14px;color:#222;transform:scaleX(0.8684);transform-origin:0 0'>TBK</div>
<div class='a' style='left:198.00px;top:173.30px;font-size:10px;line-height:14px;color:#222;transform:scaleX(0.9563);transform-origin:0 0'>test</div>
<div class='a k' style='left:196.78px;top:188.40px;font-size:10px;line-height:14px;color:#222;transform:scaleX(0.6119);transform-origin:0 0'>ソリューション</div>
<div class='a k' style='left:197.37px;top:204.50px;font-size:10px;line-height:14px;color:#222;transform:scaleX(0.6319);transform-origin:0 0'>マーケティング</div>
<div class='a k' style='left:197.12px;top:220.10px;font-size:10px;line-height:14px;color:#222;transform:scaleX(0.8821);transform-origin:0 0'>開発部</div>
<div class='a k' style='left:197.12px;top:235.70px;font-size:10px;line-height:14px;color:#222;transform:scaleX(0.8821);transform-origin:0 0'>管理部</div>
<div class='a k' style='left:391.40px;top:70.20px;font-size:10px;line-height:14px;color:#222;transform:scaleX(0.8429);transform-origin:0 0'>現選択対象</div>
<div class='a k' style='left:456.63px;top:70.10px;font-size:10px;line-height:14px;color:#222;transform:scaleX(0.6711);transform-origin:0 0'>グループ</div>
<div class='a' style='left:485.60px;top:70.60px;font-size:10px;line-height:14px;color:#222;transform:scaleX(1.4000);transform-origin:0 0'>:</div>
<div class='a' style='left:490.70px;top:70.30px;font-size:10px;line-height:14px;color:#222;transform:scaleX(0.8000);transform-origin:0 0'>Technoblood</div>
<div class='a k' style='left:741.54px;top:70.50px;font-size:10px;line-height:14px;color:#222;transform:scaleX(0.7319);transform-origin:0 0'>リスト更新</div>
<div class='a k' style='left:805.40px;top:71.10px;font-size:10px;line-height:14px;color:#222;transform:scaleX(0.8218);transform-origin:0 0'>対象選択時自動問い合わせ</div>
<div class='a k' style='left:374.94px;top:91.80px;font-size:10px;line-height:14px;color:#222;transform:scaleX(0.8577);transform-origin:0 0'>PC情報一覧</div>
<div class='a k' style='left:390.77px;top:112.20px;font-size:10px;line-height:14px;color:#222;transform:scaleX(0.7341);transform-origin:0 0'>すべての下位グループを検索</div>
<div class='a k' style='left:383.20px;top:129.80px;font-size:10.5px;line-height:14px;color:#d6f0ee;transform:scaleX(0.8048);transform-origin:0 0'>順番</div>
<div class='a k' style='left:462.65px;top:129.30px;font-size:10.5px;line-height:14px;color:#d6f0ee;transform:scaleX(0.6750);transform-origin:0 0'>グループ</div>
<div class='a k' style='left:571.25px;top:129.80px;font-size:10.5px;line-height:14px;color:#d6f0ee;transform:scaleX(0.7500);transform-origin:0 0'>ｺﾝﾋﾟｭｰﾀ名</div>
<div class='a k' style='left:637.20px;top:129.80px;font-size:10.5px;line-height:14px;color:#d6f0ee;transform:scaleX(0.8000);transform-origin:0 0'>電源</div>
<div class='a' style='left:675.00px;top:129.80px;font-size:11px;line-height:14px;color:#d6f0ee;transform:scaleX(0.8444);transform-origin:0 0'>AgentVer</div>
<div class='a' style='left:733.69px;top:129.80px;font-size:11px;line-height:14px;color:#d6f0ee;transform:scaleX(0.8100);transform-origin:0 0'>EngineVer</div>
<div class='a' style='left:823.23px;top:129.80px;font-size:11px;line-height:14px;color:#d6f0ee;transform:scaleX(0.7727);transform-origin:0 0'>CPU</div>
<div class='a k' style='left:895.23px;top:130.30px;font-size:10.5px;line-height:14px;color:#d6f0ee;transform:scaleX(0.7727);transform-origin:0 0'>ｸﾛｯｸ</div>
<div class='a' style='left:969.00px;top:129.80px;font-size:11px;line-height:14px;color:#d6f0ee;transform:scaleX(0.6562);transform-origin:0 0'>OS</div>
<div class='a' style='left:991px;top:128px;width:11px;height:384px;background:#f7f7f7'></div>
<div class='a' style='left:992px;top:129.5px;width:9.5px;height:10.5px;background:#f2f2f2;border:1px solid #e2e2e2'></div>
<svg class='a' style='left:992px;top:129.5px' width='10' height='11'><path d='M1.6 7.4 L8.4 7.4 L5 3.6 Z' fill='#4d5288'/></svg>
<div class='a' style='left:992.5px;top:141px;width:9.5px;height:342px;background:#f4f3f5;border-right:1.5px solid #d6d6d6'></div>
<div class='a' style='left:992.5px;top:483px;width:9.5px;height:18px;background:linear-gradient(90deg,#d8d6d8,#ececec)'></div>
<div class='a' style='left:995.2px;top:310px;width:4px;height:6px;background:repeating-linear-gradient(180deg,#9cc4f2 0 1px,#d6e6fa 1px 2px)'></div>
<div class='a' style='left:992px;top:501.5px;width:9.5px;height:10px;background:#f2f2f2;border:1px solid #e2e2e2'></div>
<svg class='a' style='left:992px;top:501.5px' width='10' height='10'><path d='M1.6 2.8 L8.4 2.8 L5 6.6 Z' fill='#4d5288'/></svg>
<div class='a' style='left:377px;top:512px;width:614px;height:12px;background:#fafafa'></div>
<div class='a' style='left:379px;top:512.8px;width:10px;height:10.6px;background:#f2f2f2;border:1px solid #e2e2e2'></div>
<svg class='a' style='left:379px;top:512.8px' width='10' height='11'><path d='M7.2 1.8 L7.2 9 L3.3 5.4 Z' fill='#4d5288'/></svg>
<div class='a' style='left:391px;top:514.4px;width:192px;height:9px;background:#f3f2f4;border-bottom:1.2px solid #d2d2d2'></div>
<div class='a' style='left:583px;top:512.8px;width:397px;height:11px;background:linear-gradient(180deg,#d8d6d8 0,#eeeeee 60%,#fafafa 100%)'></div>
<div class='a' style='left:484px;top:516px;width:6px;height:4.6px;background:repeating-linear-gradient(90deg,#9cc4f2 0 1px,#d6e6fa 1px 2px)'></div>
<div class='a' style='left:980px;top:512.8px;width:10px;height:10.6px;background:#f2f2f2;border:1px solid #e2e2e2'></div>
<svg class='a' style='left:980px;top:512.8px' width='10' height='11'><path d='M3 1.8 L3 9 L6.9 5.4 Z' fill='#4d5288'/></svg>
<div class='a' style='left:990px;top:512.8px;width:12px;height:11px;background:#f4f4f4'></div>
<div class='a' style='left:376.6px;top:145px;width:1px;height:379px;background:#b8b8b8'></div>
</body></html>
